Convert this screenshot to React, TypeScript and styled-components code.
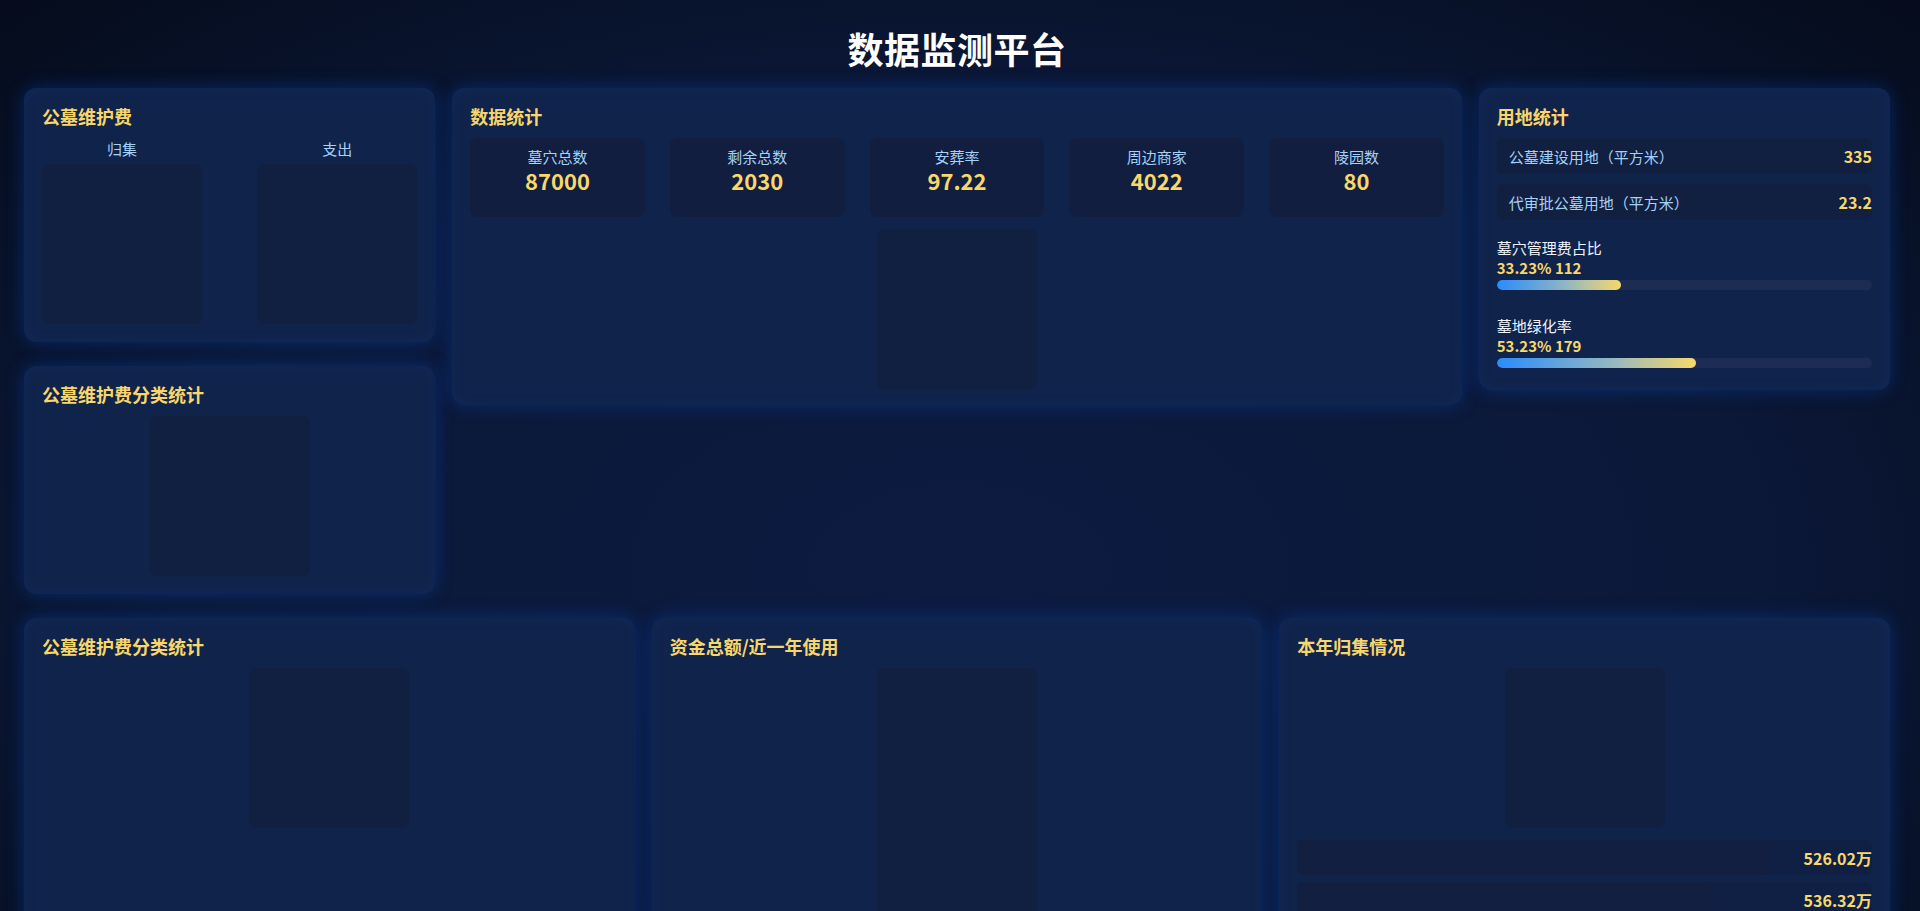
import React from "react";
import styled, { createGlobalStyle } from "styled-components";

const GlobalStyle = createGlobalStyle`
  html, body {
    margin: 0;
    padding: 0;
    background: #050b1c;
  }
  body {
    font-family: "Noto Sans CJK SC", "Noto Sans", sans-serif;
    color: #ffffff;
  }
  * { box-sizing: border-box; }
  ::-webkit-scrollbar { width: 6px; }
  ::-webkit-scrollbar-track { background: #f1f1f1; }
  ::-webkit-scrollbar-thumb { background: #c1c1c1; }
`;

const Page = styled.div`
  min-height: 100vh;
  padding: 0 30px 31px 24px;
  display: flex;
  flex-direction: column;
  gap: 24px;
  background:
    radial-gradient(ellipse 75% 80% at 50% 55%, #0c1b40 0%, #0b1838 55%, #040a18 100%);
`;

const Header = styled.header`
  padding-top: 27px;
  margin-bottom: -6px;
  text-align: center;
`;

const MainTitle = styled.h1`
  margin: 0;
  font-size: 36px;
  line-height: 43px;
  font-weight: 700;
  color: #ffffff;
  letter-spacing: 0.5px;
`;

const TopRow = styled.div`
  display: grid;
  grid-template-columns: 1fr 2.455fr 1fr;
  column-gap: 17px;
  align-items: start;
`;

const LeftCol = styled.div`
  display: flex;
  flex-direction: column;
  gap: 24px;
`;

const BottomRow = styled.div`
  display: grid;
  grid-template-columns: repeat(3, 1fr);
  column-gap: 17px;
`;

const Card = styled.section<{ $pb?: number }>`
  background: #10234b;
  border-radius: 12px;
  padding: 18px 18px ${(p) => p.$pb ?? 18}px;
  box-shadow: 0 0 18px rgba(0, 88, 220, 0.34), inset 0 0 14px rgba(40, 110, 230, 0.08);
`;

const CardTitle = styled.h2`
  margin: 0 0 12px;
  font-size: 18px;
  line-height: 20px;
  font-weight: 700;
  color: #f7d66b;
`;

const Placeholder = styled.div<{ $flatTop?: boolean; $flatBottom?: boolean }>`
  width: 160px;
  height: 160px;
  background: #111f40;
  border-radius: ${(p) =>
    `${p.$flatTop ? 0 : 8}px ${p.$flatTop ? 0 : 8}px ${p.$flatBottom ? 0 : 8}px ${p.$flatBottom ? 0 : 8}px`};
`;

const CenterStack = styled.div`
  display: flex;
  flex-direction: column;
  align-items: center;
`;

const SplitRow = styled.div`
  display: flex;
  justify-content: space-between;
`;

const SplitCol = styled.div`
  width: 160px;
  display: flex;
  flex-direction: column;
  align-items: center;
`;

const ColLabel = styled.div`
  font-size: 15px;
  line-height: 22px;
  color: #a6d1f7;
  margin-bottom: 4px;
`;

const StatGrid = styled.div`
  display: grid;
  grid-template-columns: repeat(5, 1fr);
  gap: 25px;
  margin-bottom: 12px;
`;

const StatBox = styled.div`
  background: #111e3f;
  border-radius: 8px;
  padding: 9px 8px 24px;
  text-align: center;
`;

const StatLabel = styled.div`
  font-size: 15px;
  line-height: 20px;
  color: #a6d1f7;
`;

const StatValue = styled.div`
  font-size: 22px;
  line-height: 26px;
  font-weight: 700;
  color: #f9d86b;
`;

const LandList = styled.div`
  display: flex;
  flex-direction: column;
  gap: 10px;
  margin-bottom: 18px;
`;

const LandRow = styled.div`
  height: 36px;
  display: flex;
  align-items: center;
  justify-content: space-between;
  padding: 0 0 0 12px;
  background: #111f40;
  border-radius: 6px;
`;

const LandLabel = styled.span`
  font-size: 15px;
  color: #a6d1f7;
`;

const LandValue = styled.span`
  font-size: 16px;
  font-weight: 700;
  color: #f9d86b;
`;

const ProgressList = styled.div`
  display: flex;
  flex-direction: column;
  gap: 26px;
`;

const ProgressItem = styled.div`
  display: flex;
  flex-direction: column;
`;

const ProgressLabel = styled.div`
  font-size: 15px;
  line-height: 20px;
  color: #eef3ff;
`;

const ProgressValue = styled.div`
  font-size: 15px;
  line-height: 20px;
  font-weight: 700;
  color: #f9d86b;
`;

const Track = styled.div`
  margin-top: 2px;
  height: 10px;
  border-radius: 5px;
  background: #1c2c52;
  overflow: hidden;
`;

const Fill = styled.div`
  height: 100%;
  border-radius: 5px;
  background: linear-gradient(90deg, #2a8cfb 0%, #8fb6c4 55%, #f7d86a 100%);
`;

const RankList = styled.div`
  display: flex;
  flex-direction: column;
  gap: 7px;
  margin-top: 12px;
`;

const RankRow = styled.div`
  position: relative;
  height: 35px;
  display: flex;
  align-items: center;
  justify-content: flex-end;
  border-radius: 6px;
  background: rgba(15, 28, 60, 0.45);
  overflow: hidden;
`;

const RankFill = styled.div`
  position: absolute;
  left: 0;
  top: 0;
  bottom: 0;
  background: #121f40;
  border-radius: 6px;
`;

const RankValue = styled.span`
  position: relative;
  font-size: 16px;
  font-weight: 700;
  color: #f9d86b;
`;

const stats = [
  { label: "墓穴总数", value: "87000" },
  { label: "剩余总数", value: "2030" },
  { label: "安葬率", value: "97.22" },
  { label: "周边商家", value: "4022" },
  { label: "陵园数", value: "80" },
];

const lands = [
  { label: "公墓建设用地（平方米）", value: "335" },
  { label: "代审批公墓用地（平方米）", value: "23.2" },
];

const progress = [
  { label: "墓穴管理费占比", value: "33.23% 112", pct: 33.23 },
  { label: "墓地绿化率", value: "53.23% 179", pct: 53.23 },
];

const ranks = [
  { value: "526.02万", pct: 82 },
  { value: "536.32万", pct: 72 },
];

export default function App() {
  return (
    <>
      <GlobalStyle />
      <Page>
        <Header>
          <MainTitle>数据监测平台</MainTitle>
        </Header>

        <TopRow>
          <LeftCol>
            <Card>
              <CardTitle>公墓维护费</CardTitle>
              <SplitRow>
                <SplitCol>
                  <ColLabel>归集</ColLabel>
                  <Placeholder />
                </SplitCol>
                <SplitCol>
                  <ColLabel>支出</ColLabel>
                  <Placeholder />
                </SplitCol>
              </SplitRow>
            </Card>
            <Card>
              <CardTitle>公墓维护费分类统计</CardTitle>
              <CenterStack>
                <Placeholder />
              </CenterStack>
            </Card>
          </LeftCol>

          <Card $pb={16}>
            <CardTitle>数据统计</CardTitle>
            <StatGrid>
              {stats.map((s) => (
                <StatBox key={s.label}>
                  <StatLabel>{s.label}</StatLabel>
                  <StatValue>{s.value}</StatValue>
                </StatBox>
              ))}
            </StatGrid>
            <CenterStack>
              <Placeholder />
            </CenterStack>
          </Card>

          <Card $pb={22}>
            <CardTitle>用地统计</CardTitle>
            <LandList>
              {lands.map((l) => (
                <LandRow key={l.label}>
                  <LandLabel>{l.label}</LandLabel>
                  <LandValue>{l.value}</LandValue>
                </LandRow>
              ))}
            </LandList>
            <ProgressList>
              {progress.map((p) => (
                <ProgressItem key={p.label}>
                  <ProgressLabel>{p.label}</ProgressLabel>
                  <ProgressValue>{p.value}</ProgressValue>
                  <Track>
                    <Fill style={{ width: `${p.pct}%` }} />
                  </Track>
                </ProgressItem>
              ))}
            </ProgressList>
          </Card>
        </TopRow>

        <BottomRow>
          <Card>
            <CardTitle>公墓维护费分类统计</CardTitle>
            <CenterStack>
              <Placeholder />
            </CenterStack>
          </Card>
          <Card>
            <CardTitle>资金总额/近一年使用</CardTitle>
            <CenterStack>
              <Placeholder $flatBottom />
              <Placeholder $flatTop />
            </CenterStack>
          </Card>
          <Card>
            <CardTitle>本年归集情况</CardTitle>
            <CenterStack>
              <Placeholder />
            </CenterStack>
            <RankList>
              {ranks.map((r) => (
                <RankRow key={r.value}>
                  <RankFill style={{ width: `${r.pct}%` }} />
                  <RankValue>{r.value}</RankValue>
                </RankRow>
              ))}
            </RankList>
          </Card>
        </BottomRow>
      </Page>
    </>
  );
}
